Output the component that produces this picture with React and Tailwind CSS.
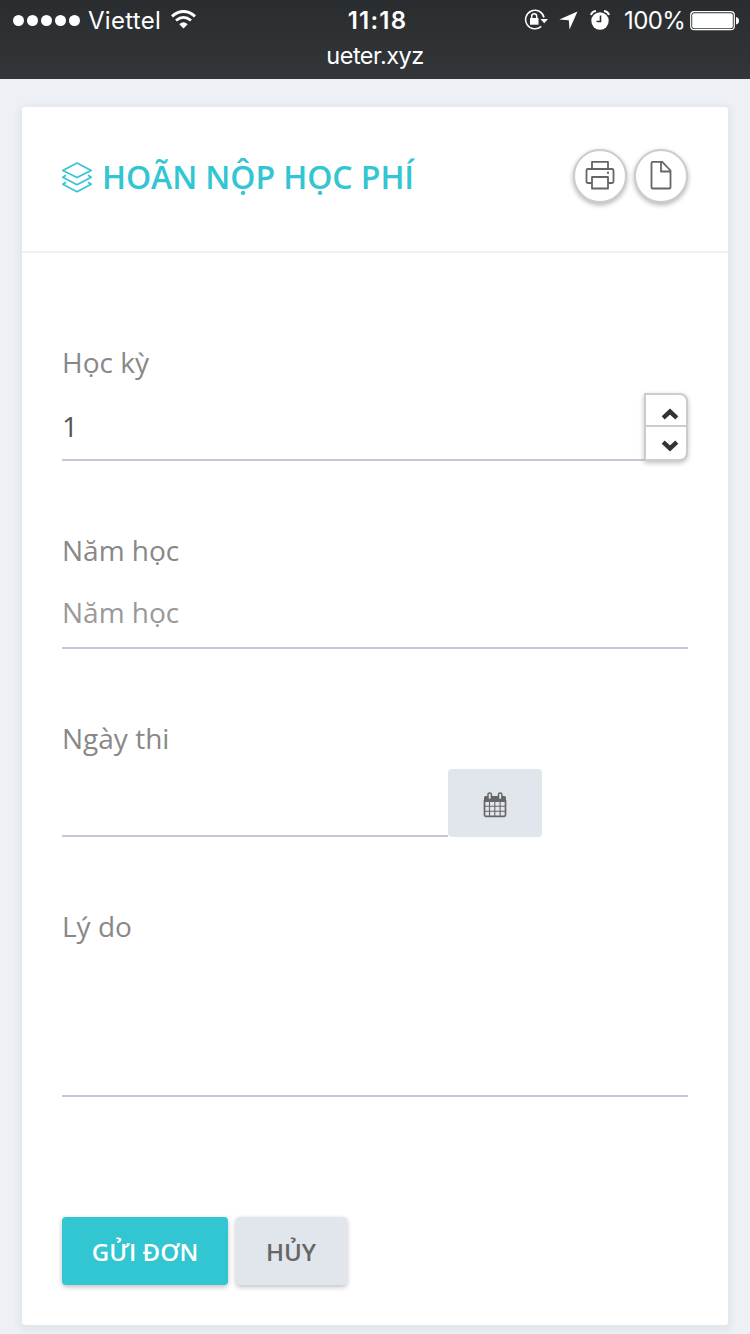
import React from "react";

function StatusBar() {
  return (
    <header className="h-[79px] overflow-hidden bg-linear-to-b from-[#2a2d30] to-[#333639] text-white font-['Inter',sans-serif]">
      <div className="grid grid-cols-[1fr_auto_1fr] items-center h-[41px] pl-[13px] pr-[11px]">
        <div className="flex h-[41px] items-center">
          <div className="flex gap-[3px]">
            {[0, 1, 2, 3, 4].map((n) => (
              <span key={n} className="size-[11px] rounded-full bg-white" />
            ))}
          </div>
          <span className="ml-[8px] w-[72px] pt-px text-[24px] leading-10 tracking-[0.3px] whitespace-nowrap">Viettel</span>
          <svg className="ml-[11px] mt-[-2px]" width="25" height="19" viewBox="0 0 25 19" fill="none" stroke="white">
            <path d="M1 6.3Q12.5 -3.3 24 6.3" strokeWidth="3" />
            <path d="M5 10.5Q12.5 4.3 20 10.5" strokeWidth="2.8" />
            <path d="M8.3 14.2Q12.5 10.5 16.7 14.2L12.5 18.4Z" fill="white" stroke="none" />
          </svg>
        </div>
        <span className="ml-[3px] pt-px text-[24px] leading-10 font-semibold tracking-[1.2px]">11:18</span>
        <div className="flex h-[41px] items-center justify-end">
          <svg className="mt-[-1px]" width="24" height="22" viewBox="0 0 24 22" fill="none" stroke="white" strokeWidth="1.5">
            <path d="M20 8.5A9.3 9.3 0 1 0 17.2 17.4" />
            <path d="M16.5 10H24L20.2 14.2Z" fill="white" stroke="none" />
            <rect x="6" y="9" width="8.5" height="6.7" fill="white" stroke="none" />
            <path d="M7.7 9.5V7.3a2.5 2.5 0 0 1 5 0v2.2" />
          </svg>
          <svg className="ml-[11px]" width="19" height="19" viewBox="0 0 19 19" fill="white">
            <path d="M18.5 .5L10.5 18.5L9.8 9.2L.3 8.5Z" />
          </svg>
          <svg className="ml-[12px] mt-[-1px]" width="20" height="20" viewBox="0 0 20 20" fill="none">
            <circle cx="10" cy="11" r="8.7" fill="white" />
            <path d="M1 5Q2 1.5 6 1M19 5Q18 1.5 14 1" stroke="white" strokeWidth="2" />
            <path d="M10.5 5.5V11.5H6.5" stroke="#2d3033" strokeWidth="1.6" />
          </svg>
          <span className="ml-[14px] w-[60px] pt-px text-[24px] leading-10 tracking-[-0.6px] whitespace-nowrap">100%</span>
          <svg className="ml-[6px]" width="49" height="20" viewBox="0 0 49 20">
            <rect x=".7" y=".7" width="43.6" height="18" rx="3.5" fill="none" stroke="white" strokeWidth="1.2" />
            <rect x="2.2" y="2.2" width="40.6" height="15" rx="2" fill="white" />
            <path d="M46 6Q49 6.5 49 9.7T46 13.4Z" fill="white" />
          </svg>
        </div>
      </div>
      <div className="text-center text-[23.5px] leading-[30px] tracking-[-0.5px]">ueter.xyz</div>
    </header>
  );
}

function LayersIcon() {
  return (
    <svg className="mt-px" width="30" height="31" viewBox="0 0 30 31" fill="none" stroke="#32c5d2" strokeWidth="1.6" strokeLinejoin="round">
      <path d="M15 1L29.2 8.5L15 15.5L.8 8.5Z" />
      <path d="M4 13.2L.8 15.2L15 22.7L29.2 15.2L26 13.2" />
      <path d="M4 20.2L.8 22.2L15 29.7L29.2 22.2L26 20.2" />
    </svg>
  );
}

function RoundButton({ label, children }) {
  return (
    <button
      aria-label={label}
      className="flex size-[54px] items-center justify-center rounded-full border-2 border-[#ccc] bg-white shadow-[0_2px_5px_rgba(0,0,0,0.3)]"
    >
      {children}
    </button>
  );
}

function Label({ children }) {
  return <label className="block h-[51px] text-[28px] leading-10 text-[#888]">{children}</label>;
}

function CalendarIcon() {
  return (
    <svg className="mt-[3px] mr-px" width="24" height="26" viewBox="0 0 24 26" fill="none" stroke="#666">
      <path d="M1 5.5Q1 4 2.5 4H21.5Q23 4 23 5.5V10H1Z" fill="#666" stroke="none" />
      <path d="M1.5 8V23Q1.5 24.3 2.8 24.3H21.2Q22.5 24.3 22.5 23V8" strokeWidth="1.7" />
      <path d="M6.5 9V24M11.8 9V24M17.1 9V24M2 14.3H22M2 19.3H22" strokeWidth="1.1" />
      <rect x="5" y="1" width="3.4" height="6.5" rx="1.6" fill="#e1e5ec" strokeWidth="1.5" />
      <rect x="15.5" y="1" width="3.4" height="6.5" rx="1.6" fill="#e1e5ec" strokeWidth="1.5" />
    </svg>
  );
}

function Chevron({ down }) {
  return (
    <svg width="18" height="12" viewBox="0 0 18 12" fill="none" stroke="#333" strokeWidth="4.4">
      <path d={down ? "M2.2 2.2L9 8.4L15.8 2.2" : "M2.2 9.8L9 3.6L15.8 9.8"} />
    </svg>
  );
}

export default function App() {
  return (
    <div className="h-[1334px] overflow-hidden bg-[#edf1f5] font-['Open_Sans',sans-serif]">
      <StatusBar />
      <main className="mx-[22px] mt-7 h-[1218px] rounded-[3px] bg-white shadow-[0_2px_6px_4px_rgba(60,80,100,0.055)]">
        <div className="flex h-[146px] items-start justify-between border-b-2 border-[#eef1f5] px-10">
          <div className="flex items-center pt-[50px]">
            <LayersIcon />
            <h1 className="ml-[10px] text-[32px] leading-10 font-semibold tracking-[-0.08px] whitespace-nowrap text-[#32c5d2]">HOÃN NỘP HỌC PHÍ</h1>
          </div>
          <div className="flex gap-[7px] pt-[42px]">
            <RoundButton label="In">
              <svg className="mt-[-3px]" width="30" height="30" viewBox="0 0 30 30" fill="none" stroke="#666" strokeWidth="1.8" strokeLinejoin="round">
                <path d="M7 9V1.8H23V9M7 23H3Q1.5 23 1.5 21.5V10.5Q1.5 9 3 9H27Q28.5 9 28.5 10.5V21.5Q28.5 23 27 23H23" />
                <rect x="7" y="17" width="16" height="11.5" />
                <path d="M22 12.8H24" strokeWidth="2" />
              </svg>
            </RoundButton>
            <RoundButton label="Tài liệu">
              <svg className="mt-[-3px]" width="22" height="30" viewBox="0 0 22 30" fill="none" stroke="#666" strokeWidth="1.8" strokeLinejoin="round">
                <path d="M12.2 1.8H2.8Q1.5 1.8 1.5 3V27.2Q1.5 28.5 2.8 28.5H19.2Q20.5 28.5 20.5 27.2V10.5L12.2 1.8ZM11 2V11.5H20.5" />
              </svg>
            </RoundButton>
          </div>
        </div>
        <form className="px-10 pt-[89px]">
          <div className="h-[188px]">
            <Label>Học kỳ</Label>
            <div className="flex h-[68px]">
              <div className="flex-1 border-b-2 border-[#c2cad8] text-[28px] leading-[66px] text-[#555]">1</div>
              <div className="flex w-11 flex-col rounded-r-[8px] border-2 border-[#ccc] bg-white shadow-[0_2px_5px_rgba(0,0,0,0.25)]">
                <div className="flex h-[32px] items-end justify-end border-b-2 border-[#ccc] pr-[7px] pb-[5px]">
                  <Chevron />
                </div>
                <div className="flex flex-1 items-start justify-end pt-[13px] pr-[7px]">
                  <Chevron down />
                </div>
              </div>
            </div>
          </div>
          <div className="h-[188px]">
            <Label>Năm học</Label>
            <div className="h-[68px] border-b-2 border-[#c2cad8] text-[28px] leading-[62px] text-[#999]">Năm học</div>
          </div>
          <div className="h-[188px]">
            <Label>Ngày thi</Label>
            <div className="flex h-[68px] w-[480px]">
              <div className="flex-1 border-b-2 border-[#c2cad8]" />
              <button type="button" aria-label="Chọn ngày" className="flex w-[94px] items-center justify-center rounded-[4px] bg-[#e1e5ec]">
                <CalendarIcon />
              </button>
            </div>
          </div>
          <Label>Lý do</Label>
          <div className="h-[140px] border-b-2 border-[#c2cad8]" />
          <div className="mt-[120px] flex gap-[7.5px] text-[24px] font-semibold">
            <button type="button" className="h-[68px] w-[166px] rounded-[4px] bg-[#32c5d2] pt-[2px] text-white shadow-[0_2px_5px_rgba(0,0,0,0.25)]">GỬI ĐƠN</button>
            <button type="button" className="h-[68px] w-[111px] rounded-[4px] bg-[#e1e5ec] pt-[2px] text-[#666] shadow-[0_2px_5px_rgba(0,0,0,0.25)]">HỦY</button>
          </div>
        </form>
      </main>
    </div>
  );
}
